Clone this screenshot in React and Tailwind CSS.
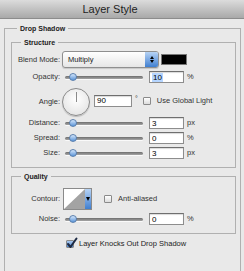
const font = { fontFamily: '"Liberation Sans", Arial, sans-serif' };

function Slider({ pos = 7 }) {
  return (
    <div className="relative w-[84px] h-[12px] flex items-center">
      <div className="mx-[3px] h-[3px] flex-1 rounded-full bg-gradient-to-b from-[#6e6e6e] to-[#a6a6a6] shadow-[0_1px_0_#fafafa]" />
      <div
        className="absolute top-[2px] w-[8px] h-[8px] rounded-full border border-[#5a7fae] bg-gradient-to-b from-[#d4e6fb] to-[#5d96d8]"
        style={{ left: pos }}
      />
    </div>
  );
}

function Field({ value, w = 35, selected }) {
  return (
    <div
      className="h-[12px] border border-[#8d8d8d] border-t-[#6f6f6f] bg-white flex items-center pl-[2px] text-[8px] text-black shadow-[inset_0_1px_1px_rgba(0,0,0,0.15)]"
      style={{ width: w }}
    >
      <span className={selected ? 'bg-[#b5d5ff] px-[1px] leading-[9px]' : 'leading-[9px]'}>{value}</span>
    </div>
  );
}

function Check({ checked }) {
  return (
    <div className="relative w-[8px] h-[8px] rounded-[1px] border border-[#8a8a8a] bg-gradient-to-b from-white to-[#dcdcdc]">
      {checked && (
        <>
          <div className="absolute inset-0 bg-gradient-to-b from-[#a9c8ee] to-[#4f88cf]" />
          <svg className="absolute left-[-1px] top-[-4px]" width="12" height="12" viewBox="0 0 12 12">
            <path d="M2 7 L4.5 10 L10.5 1.5" fill="none" stroke="#1d2a44" strokeWidth="2" strokeLinecap="round" strokeLinejoin="round" />
          </svg>
        </>
      )}
    </div>
  );
}

function Row({ label, children, className = '' }) {
  return (
    <div className={`flex items-center ${className}`}>
      <div className="w-[48px] text-right text-[7.5px] text-[#333] leading-none">{label}</div>
      <div className="ml-[2px] flex items-center">{children}</div>
    </div>
  );
}

function SliderRow({ label, value, unit, selected, className }) {
  return (
    <Row label={label} className={`h-[12px] ${className}`}>
      <Slider />
      <div className="ml-[3px]">
        <Field value={value} selected={selected} />
      </div>
      <span className="ml-[3px] text-[7.5px] text-[#333]">{unit}</span>
    </Row>
  );
}

export default function App() {
  return (
    <div className="w-[244px] h-[271px] overflow-hidden bg-[#e9e9e9]" style={font}>
      <div className="h-[19px] border-b border-[#8c8c8c] bg-gradient-to-b from-[#dcdcdc] to-[#a9a9a9] flex items-center justify-center pr-[24px]">
        <span className="text-[11px] text-[#1e1e1e]">Layer Style</span>
      </div>

      <div className="pl-[4px] pr-[3px]">
        <fieldset className="mt-[4px] h-[300px] border border-[#b0b0b0] pr-[4px]">
          <legend className="ml-[12px] px-[3px] text-[7px] font-bold leading-[11px] text-[#222]">Drop Shadow</legend>

          <fieldset className="mt-[3px] ml-[6px] border border-[#b0b0b0] pb-[8px]">
            <legend className="ml-[9px] px-[3px] text-[7px] font-bold leading-[11px] text-[#222]">Structure</legend>

            <Row label="Blend Mode:" className="mt-[3px] h-[17px]">
              <div className="w-[97px] h-[17px] rounded-[3px] border border-[#8f8f8f] bg-gradient-to-b from-white to-[#e6e6e6] flex items-center shadow-[0_1px_1px_rgba(0,0,0,0.15)]">
                <span className="ml-[5px] flex-1 text-[7.5px] text-[#222]">Multiply</span>
                <div className="w-[13px] h-[15px] rounded-r-[2px] bg-gradient-to-b from-[#b7d3f4] to-[#3f7fd0] flex flex-col items-center justify-center gap-[1px]">
                  <div className="w-0 h-0 border-l-[2px] border-r-[2px] border-b-[3px] border-l-transparent border-r-transparent border-b-black" />
                  <div className="w-0 h-0 border-l-[2px] border-r-[2px] border-t-[3px] border-l-transparent border-r-transparent border-t-black" />
                </div>
              </div>
              <div className="ml-[2px] w-[26px] h-[11px] bg-black border border-[#777]" />
            </Row>

            <SliderRow label="Opacity:" value="10" unit="%" selected className="mt-[3px]" />

            <Row label="Angle:" className="mt-[5px] h-[28px]">
              <div className="relative w-[28px] h-[28px] rounded-full border border-[#8a8a8a] bg-[radial-gradient(circle_at_50%_40%,#ffffff,#dedede)] shadow-[0_1px_1px_rgba(0,0,0,0.2)]">
                <div className="absolute left-[13px] top-[3px] w-[1px] h-[10px] bg-[#8a8a8a]" />
              </div>
              <div className="ml-[4px] -mt-[3px]">
                <Field value="90" w={38} />
              </div>
              <span className="ml-[3px] -mt-[6px] text-[7px] text-[#333]">°</span>
              <div className="ml-[5px] -mt-[3px]">
                <Check />
              </div>
              <span className="ml-[6px] -mt-[3px] text-[7.5px] text-[#333]">Use Global Light</span>
            </Row>

            <SliderRow label="Distance:" value="3" unit="px" className="mt-[1px]" />
            <SliderRow label="Spread:" value="0" unit="%" className="mt-[3px]" />
            <SliderRow label="Size:" value="3" unit="px" className="mt-[3px]" />
          </fieldset>

          <fieldset className="mt-[3px] ml-[6px] border border-[#b0b0b0] pb-[8px]">
            <legend className="ml-[9px] px-[3px] text-[7px] font-bold leading-[11px] text-[#222]">Quality</legend>

            <Row label="Contour:" className="mt-[6px] h-[22px]">
              <div className="ml-[1px] w-[29px] h-[22px] border border-[#8a8a8a] flex bg-white">
                <svg width="21" height="20" viewBox="0 0 21 20" className="block">
                  <polygon points="0,20 21,0 21,20" fill="#a3a3a3" />
                </svg>
                <div className="w-[6px] h-[20px] bg-gradient-to-b from-[#b7d3f4] to-[#3f7fd0] flex items-center justify-center">
                  <div className="w-0 h-0 border-l-[2px] border-r-[2px] border-t-[4px] border-l-transparent border-r-transparent border-t-black" />
                </div>
              </div>
              <div className="ml-[12px]">
                <Check />
              </div>
              <span className="ml-[6px] text-[7.5px] text-[#333]">Anti-aliased</span>
            </Row>

            <SliderRow label="Noise:" value="0" unit="%" className="mt-[3px]" />
          </fieldset>

          <div className="mt-[5px] h-[10px] pl-[61px] flex items-center">
            <Check checked />
            <span className="ml-[5px] text-[7.5px] text-[#222]">Layer Knocks Out Drop Shadow</span>
          </div>
        </fieldset>
      </div>
    </div>
  );
}
